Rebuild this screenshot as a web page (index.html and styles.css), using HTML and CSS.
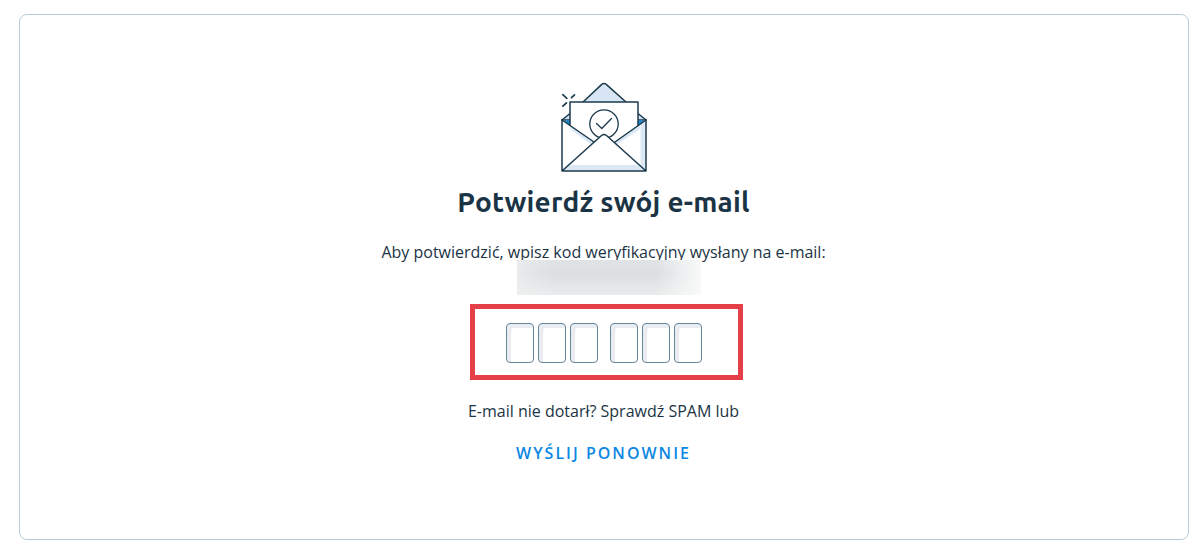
FILE: index.html
```
<!DOCTYPE html>
<html lang="pl">
<head>
  <meta charset="UTF-8" />
  <meta name="viewport" content="width=device-width, initial-scale=1.0" />
  <title>Potwierdź swój e-mail</title>
  <link rel="stylesheet" href="styles.css">
</head>
<body>
  <main class="card">
    <svg class="mail-icon" viewBox="10 6 88 92" aria-hidden="true">
      <path d="M12 45.5 54 9 96 45.5V96H12z" fill="#fff" />
      <path d="M33 27 51.5 10Q54 7.5 56.5 10L76 27z" fill="#d7e5f4" />
      <path d="M12 45 20 38.5V50zM96 45 88 38.5V50z" fill="#d7e5f4" />
      <path d="M13 45.5H20V51zM96 45.5H88V51z" fill="#0d8de3" />
      <path class="line" d="M33 27 51.5 9.6Q54 7.6 56.5 9.6L76 27M20 38.5 12 45M88 38.5 96 45" />
      <path class="line thin" d="M12 44.8H20M88 44.8H96" />
      <path d="M20 27H88V51L65 67H44L20 51z" fill="#fff" />
      <path class="line" d="M20 51V27H88V51" />
      <circle class="line thin" cx="54" cy="49" r="14.2" />
      <path class="line thin" d="M46.5 48.5 51.8 53.5 61.5 43.5" />
      <path d="M12 45 44 67 54 59 65 67 96 45V96H12z" fill="#fff" />
      <path d="M12.5 96 19 90H90.5V50L96 46V96zM20 50.5 44 67 41 69.5 20 54zM90 49 64 67 67 69.5 90 54z" fill="#dce9f5" />
      <path d="M19 90 51.5 61Q54 59 56.5 61L90.5 90z" fill="#fff" />
      <path class="line" d="M12 45V96H96V45M12 45 44 67M96 45 65 67M12 96 51.5 60.5Q54 58.5 56.5 60.5L96 96" />
      <path class="line spark" d="M12.8 19.6 16.8 23.3M24.5 19.8 21.5 22.7M12.8 31.2 16.5 27.8" />
    </svg>

    <h1 class="title">Potwierdź swój e-mail</h1>
    <p class="text">Aby potwierdzić, wpisz kod weryfikacyjny wysłany na e-mail:</p>
    <div class="address"></div>

    <form class="code">
      <div class="code-group">
        <input class="digit" maxlength="1" aria-label="Cyfra 1">
        <input class="digit" maxlength="1" aria-label="Cyfra 2">
        <input class="digit" maxlength="1" aria-label="Cyfra 3">
      </div>
      <div class="code-group">
        <input class="digit" maxlength="1" aria-label="Cyfra 4">
        <input class="digit" maxlength="1" aria-label="Cyfra 5">
        <input class="digit" maxlength="1" aria-label="Cyfra 6">
      </div>
    </form>

    <p class="text">E-mail nie dotarł? Sprawdź SPAM lub</p>
    <a class="resend" href="#">WYŚLIJ PONOWNIE</a>
  </main>
</body>
</html>
```

FILE: styles.css
```
* {
  box-sizing: border-box;
}

body {
  margin: 0;
  padding: 14px 14px 11px 19px;
  height: 551px;
  overflow: hidden;
  background: #fff;
  color: #1b3445;
  font-family: "Open Sans", "Noto Sans", sans-serif;
}

.card {
  display: flex;
  flex-direction: column;
  align-items: center;
  height: 526px;
  padding-top: 66px;
  border: 1px solid #b5cede;
  border-radius: 8px;
}

.mail-icon {
  width: 88px;
  height: 92px;
}

.line {
  fill: none;
  stroke: #1d3a4d;
  stroke-width: 1.5;
  stroke-linecap: round;
  stroke-linejoin: round;
}

.thin {
  stroke-width: 1.3;
}

.spark {
  stroke-width: 1.7;
}

.title {
  margin: 9px 1px 0 0;
  font-family: Ubuntu, "Noto Sans", sans-serif;
  font-size: 28px;
  font-weight: 700;
  line-height: 40px;
  letter-spacing: 0.22px;
  white-space: nowrap;
}

.text {
  margin: 0 1px 0 0;
  font-size: 16px;
  font-weight: 400;
  line-height: 24px;
  white-space: nowrap;
}

.title + .text {
  margin-top: 18px;
}

/* hidden address, covers the descenders of the line above */
.address {
  position: relative;
  z-index: 1;
  width: 184px;
  height: 35px;
  margin: -4px 0 9px 10px;
  background:
    linear-gradient(to right, rgba(244, 245, 245, 0.5), transparent 20%, transparent 75%, #f8f9f9 100%),
    linear-gradient(#dfe3e5, #dbdfe1 40%, #eaebec);
}

.code {
  display: flex;
  gap: 12px;
  width: 273px;
  height: 76px;
  margin: 0 0 19px 5px;
  padding: 14px 0 0 31px;
  border: 5px solid #e54047;
}

.code-group {
  display: flex;
  gap: 4px;
}

.digit {
  width: 28px;
  height: 40px;
  padding: 0;
  border: 1px solid #668699;
  border-radius: 4px;
  background: #fff;
  box-shadow: inset 4px 4px #e9edf1;
  font: inherit;
  text-align: center;
}

.resend {
  margin: 18px 1px 0 0;
  color: #0d87e4;
  font-size: 16px;
  font-weight: 600;
  line-height: 24px;
  letter-spacing: 2px;
  text-decoration: none;
}
```
